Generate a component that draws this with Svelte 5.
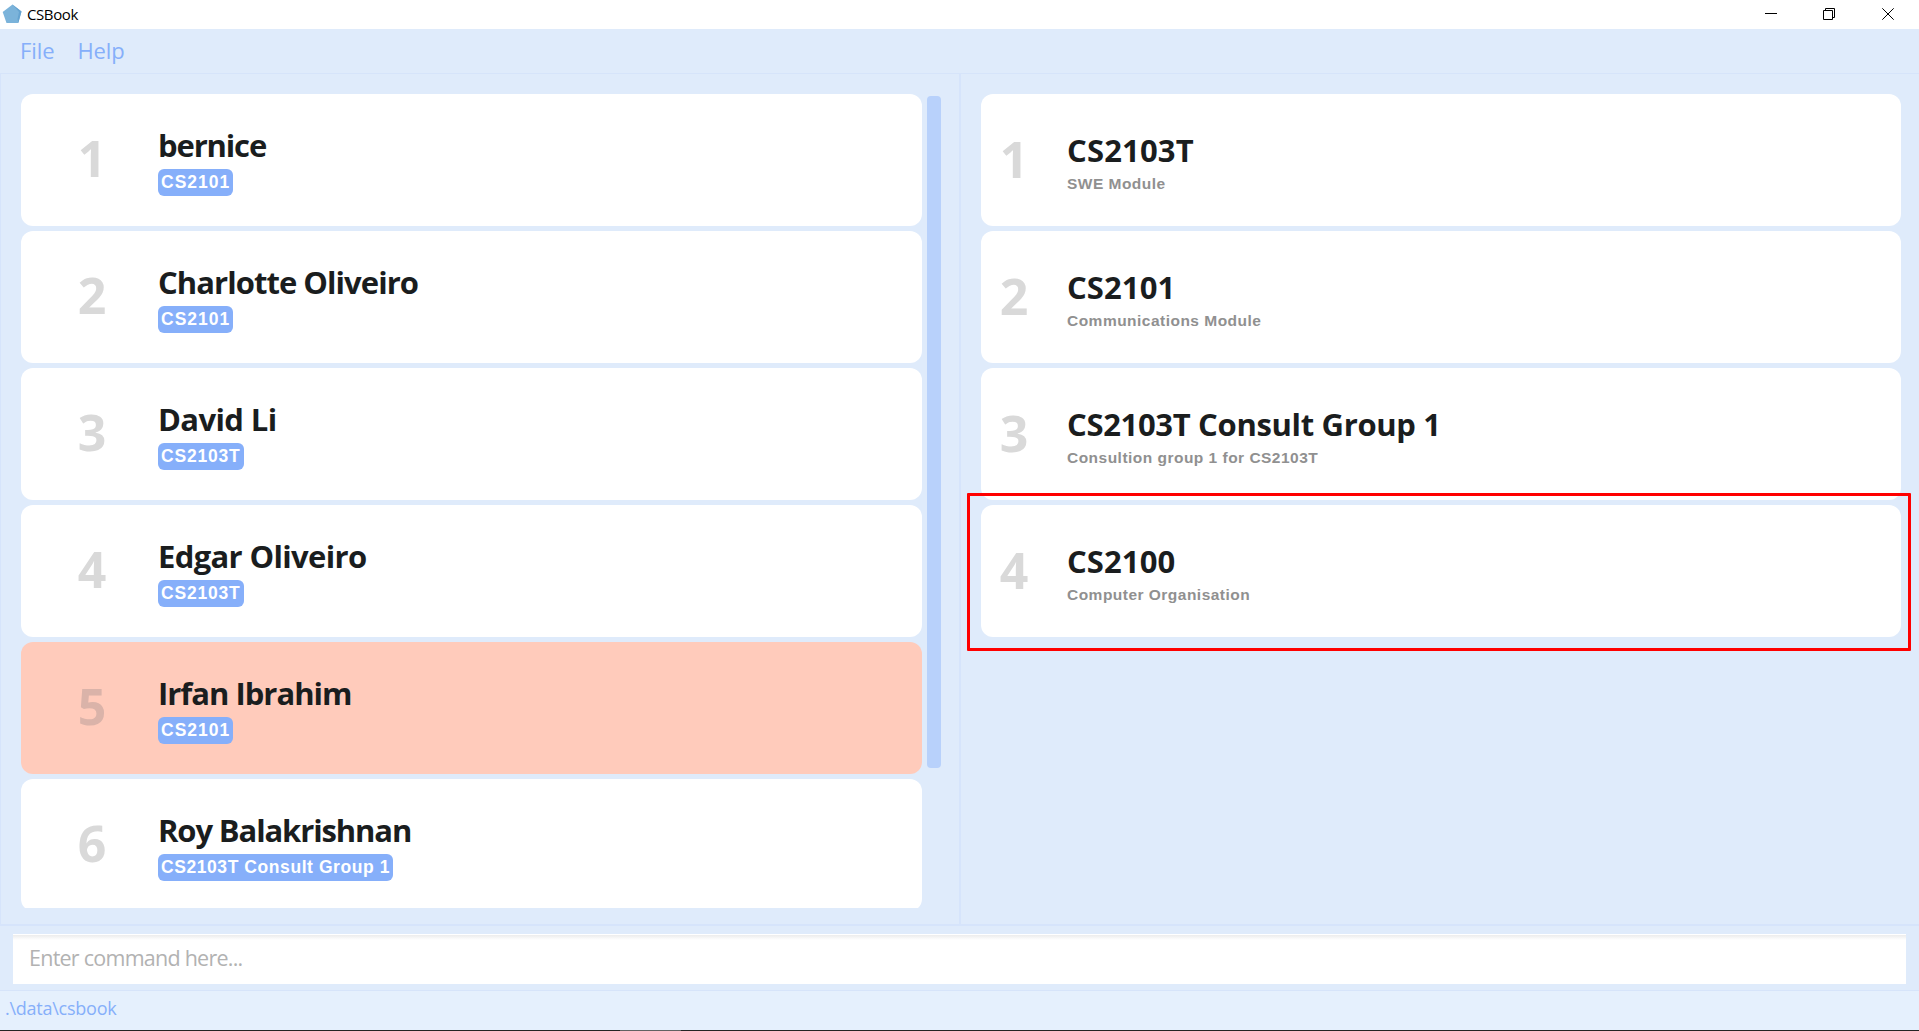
<script>
  // `track` and `tagTrack` are letter-spacing values in pixels.
  const people = [
    { name: 'bernice', track: -1.15, tag: 'CS2101', tagTrack: 1 },
    { name: 'Charlotte Oliveiro', track: -0.95, tag: 'CS2101', tagTrack: 1 },
    { name: 'David Li', track: -0.6, tag: 'CS2103T', tagTrack: 0.8 },
    { name: 'Edgar Oliveiro', track: -0.65, tag: 'CS2103T', tagTrack: 0.8 },
    { name: 'Irfan Ibrahim', track: -1, tag: 'CS2101', tagTrack: 1, selected: true },
    { name: 'Roy Balakrishnan', track: -1.12, tag: 'CS2103T Consult Group 1', tagTrack: 0.57 }
  ];
  const groups = [
    { name: 'CS2103T', track: 0.15, description: 'SWE Module' },
    { name: 'CS2101', track: 0.1, description: 'Communications Module' },
    { name: 'CS2103T Consult Group 1', track: -0.33, description: 'Consultion group 1 for CS2103T' },
    { name: 'CS2100', track: 0.1, description: 'Computer Organisation', marked: true }
  ];
</script>

<div class="window">
  <header class="titlebar">
    <svg class="logo" width="20" height="20" viewBox="0 0 20 20">
      <path d="M10.5.5 19.5 7.5 16.3 19H4.5L.7 8Z" fill="#7bb3da" />
      <path d="M10.5.5 19.5 7.5 16.3 19 15.5 15 17 8Z" fill="#65a3d0" />
    </svg>
    <span class="title">CSBook</span>
    <div class="controls">
      <svg width="12" height="12" viewBox="0 0 12 12"><path d="M0 5.5H12" /></svg>
      <svg width="12" height="12" viewBox="0 0 12 12"><path d="M.5 2.5H9.5V11.5H.5ZM2.5 2V.5H11.5V9.5H10" /></svg>
      <svg width="12" height="12" viewBox="0 0 12 12"><path d="M.3.3 11.7 11.7M11.7.3.3 11.7" /></svg>
    </div>
  </header>

  <nav class="menu"><span>File</span><span>Help</span></nav>

  <main class="panes">
    <section class="pane people">
      <div class="list">
        {#each people as person, i}
          <article class="card" class:selected={person.selected}>
            <span class="num">{i + 1}</span>
            <div class="info">
              <h2 style:letter-spacing="{person.track}px">{person.name}</h2>
              <span class="tag" style:letter-spacing="{person.tagTrack}px">{person.tag}</span>
            </div>
          </article>
        {/each}
      </div>
      <div class="scrollbar"></div>
    </section>
    <section class="pane groups">
      <div class="list">
        {#each groups as group, i}
          <article class="card">
            <span class="num">{i + 1}</span>
            <div class="info">
              <h2 style:letter-spacing="{group.track}px">{group.name}</h2>
              <p>{group.description}</p>
            </div>
            {#if group.marked}<div class="marker"></div>{/if}
          </article>
        {/each}
      </div>
    </section>
  </main>

  <section class="command">
    <input placeholder="Enter command here..." />
  </section>
  <footer class="status">.\data\csbook</footer>
  <div class="edge"></div>
</div>

<style>
  :global(body) { margin: 0; overflow: hidden; }
  .window {
    height: 1031px;
    display: flex;
    flex-direction: column;
    background: #dfebfb;
    font-family: 'Open Sans', 'Noto Sans', sans-serif;
  }
  .titlebar {
    height: 29px;
    display: flex;
    align-items: center;
    background: #fff;
    box-sizing: border-box;
    padding: 0 25px 0 2px;
  }
  .logo { margin-top: -1px; }
  .title { margin: -2px 0 0 5px; font-size: 15px; line-height: 28px; letter-spacing: -0.4px; color: #000; }
  .controls { margin-left: auto; display: flex; gap: 47px; margin-top: -1px; }
  .controls svg { fill: none; stroke: #000; stroke-width: 1; display: block; }
  .controls svg:first-child { margin-right: -1px; }
  .menu {
    height: 44px;
    display: flex;
    gap: 23px;
    padding-left: 20px;
    border-bottom: 1px solid #d6e4fa;
    color: #86affa;
    font-size: 22px;
    line-height: 42px;
    letter-spacing: -0.1px;
  }
  .panes { height: 850px; display: flex; border-bottom: 2px solid #d6e4fb; }
  .pane { box-sizing: border-box; display: flex; }
  .people { width: 961px; border-left: 1px solid #d6e4fb; border-right: 2px solid #d6e4fb; padding: 20px 0 0 20px; }
  .groups { width: 958px; padding: 20px 0 0 20px; }
  .list { display: flex; flex-direction: column; gap: 5px; }
  .people .list { width: 901px; height: 814px; overflow: hidden; }
  .groups .list { width: 920px; }
  .card {
    position: relative;
    flex: none;
    height: 132px;
    display: flex;
    border-radius: 12px;
    background: #fff;
  }
  .card.selected { background: #ffcbbb; }
  .num { width: 64px; text-align: center; font-family: 'Noto Sans', sans-serif; font-size: 50px; line-height: 68px; font-weight: 700; color: #d9d9d9; }
  .selected .num { color: #dab3a9; }
  .people .num { margin: 30px 0 0 39px; }
  .groups .num { margin: 31px 0 0 1px; }
  .people .info { padding: 30px 0 0 34px; }
  .groups .info { padding: 35px 0 0 21px; }
  h2 { margin: 0; font-size: 31px; line-height: 42px; font-weight: 700; color: #1a1d1e; white-space: nowrap; }
  .tag, p { font-family: 'Liberation Sans', Arial, sans-serif; font-weight: 700; }
  .tag {
    display: block;
    width: max-content;
    margin-top: 3px;
    padding: 0 3px;
    border-radius: 6px;
    background: #86affa;
    color: #fff;
    font-size: 17.5px;
    line-height: 27px;
  }
  p { margin: 3px 0 0; font-size: 15.5px; line-height: 20px; letter-spacing: 0.48px; color: #909090; }
  .marker { position: absolute; left: -14px; top: -12px; width: 938px; height: 152px; border: 3px solid #f00; border-radius: 1px; }
  .command { height: 65px; box-sizing: border-box; padding: 8px 13px 7px; border-bottom: 1px solid #d6e4fa; }
  input {
    display: block;
    width: 100%;
    height: 50px;
    box-sizing: border-box;
    border: 0;
    border-top: 1px solid #fff;
    padding: 0 17px 5px 16px;
    background: linear-gradient(#ececec, #fff 5px);
    font: 21.5px/44px 'Open Sans', 'Noto Sans', sans-serif;
    letter-spacing: -0.75px;
  }
  input::placeholder { color: #b2b2b2; opacity: 1; }
  .status { flex: 1; background: #e5f0fd; padding-left: 5px; color: #86affa; font-size: 18px; line-height: 35px; letter-spacing: -0.25px; }
  .edge { height: 1px; background: linear-gradient(90deg, #242424 620px, #626262 620px 681px, #242424 681px); }
  .scrollbar { width: 14px; height: 672px; margin: 2px 0 0 5px; border-radius: 4px; background: #b8d1fb; }
</style>
